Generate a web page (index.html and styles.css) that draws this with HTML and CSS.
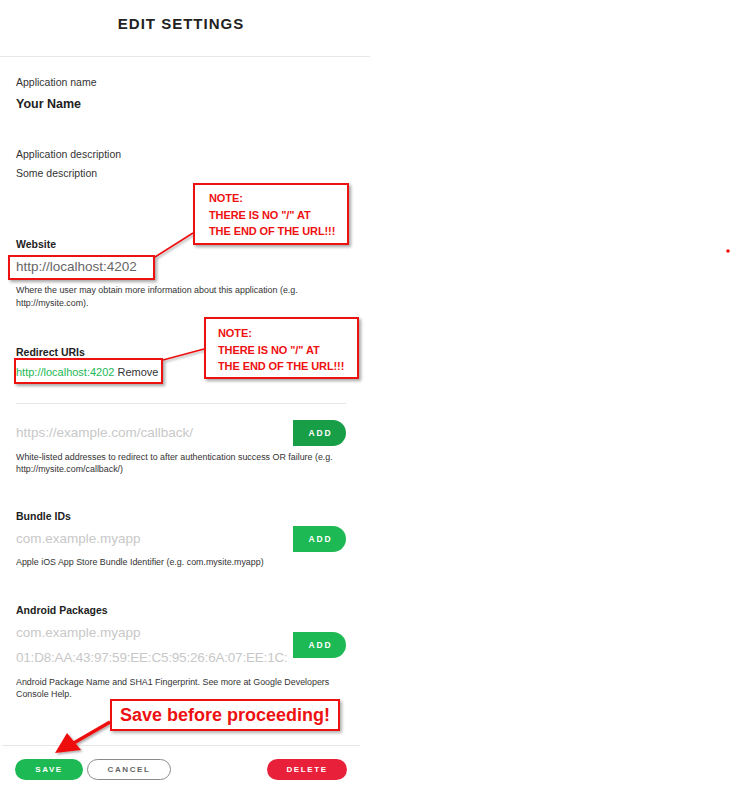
FILE: index.html
```html
<!DOCTYPE html>
<html>
<head>
<meta charset="utf-8">
<title>Edit Settings</title>
<link rel="stylesheet" href="styles.css">
</head>
<body>
<div class="panel">
  <div class="header">EDIT SETTINGS</div>
  <div class="content">
    <div class="label m17">Application name</div>
    <div class="value-strong m5">Your Name</div>

    <div class="label m32">Application description</div>
    <div class="label m3">Some description</div>

    <div class="label bold m55">Website</div>
    <input class="text-input website m4" value="http://localhost:4202">
    <div class="help m6">Where the user may obtain more information about this application (e.g. http://mysite.com).</div>

    <div class="label bold m34">Redirect URIs</div>
    <div class="uri m4"><span class="uri-link">http://localhost:4202</span> <span class="remove">Remove</span></div>
    <div class="divider"></div>

    <div class="add-row m16">
      <input class="text-input" placeholder="https://example.com/callback/">
      <button class="add-btn dark">ADD</button>
    </div>
    <div class="help h2 m5">White-listed addresses to redirect to after authentication success OR failure (e.g. http://mysite.com/callback/)</div>

    <div class="label bold m32">Bundle IDs</div>
    <div class="add-row m2">
      <input class="text-input" placeholder="com.example.myapp">
      <button class="add-btn">ADD</button>
    </div>
    <div class="help m4">Apple iOS App Store Bundle Identifier (e.g. com.mysite.myapp)</div>

    <div class="label bold m32">Android Packages</div>
    <div class="add-row pkg m2">
      <div class="inputs">
        <input class="text-input tall" placeholder="com.example.myapp">
        <input class="text-input tall fp" placeholder="01:D8:AA:43:97:59:EE:C5:95:26:6A:07:EE:1C:">
      </div>
      <button class="add-btn">ADD</button>
    </div>
    <div class="help h2 m6">Android Package Name and SHA1 Fingerprint. See more at Google Developers Console Help.</div>
  </div>
  <div class="footer">
    <button class="pill save">SAVE</button>
    <button class="pill cancel">CANCEL</button>
    <span class="spacer"></span>
    <button class="pill delete">DELETE</button>
  </div>
</div>

<div class="annotations">
  <svg class="connectors" width="731" height="795" viewBox="0 0 731 795">
    <defs>
      <filter id="sh" x="-20%" y="-20%" width="140%" height="140%">
        <feDropShadow dx="1.5" dy="1.5" stdDeviation="1" flood-color="#000" flood-opacity="0.35"/>
      </filter>
    </defs>
    <g filter="url(#sh)">
      <line x1="193" y1="233" x2="155" y2="257" stroke="#ee1111" stroke-width="1.5"/>
      <line x1="204" y1="349" x2="163" y2="360" stroke="#ee1111" stroke-width="1.5"/>
      <line x1="110" y1="722" x2="72" y2="744" stroke="#ee1111" stroke-width="3.5"/>
      <polygon points="55,753 67,733 81,750" fill="#ee1111"/>
    </g>
    <circle cx="728" cy="251" r="1.8" fill="#ee1111"/>
  </svg>
  <div class="red-box box-website"></div>
  <div class="red-box box-redirect"></div>
  <div class="note note-1">NOTE:<br>THERE IS NO "/" AT<br>THE END OF THE URL!!!</div>
  <div class="note note-2">NOTE:<br>THERE IS NO "/" AT<br>THE END OF THE URL!!!</div>
  <div class="save-note">Save before proceeding!</div>
</div>
</body>
</html>
```
FILE: styles.css
```css
body {
  margin: 0;
  background: #fff;
  font-family: "Liberation Sans", Arial, sans-serif;
  color: #222;
}

.panel {
  width: 370px;
}

.header {
  height: 57px;
  box-sizing: border-box;
  border-bottom: 1px solid #e6e6e6;
  padding: 14px 8px 0 0;
  text-align: center;
  font-size: 15px;
  line-height: 20px;
  font-weight: bold;
  letter-spacing: 1px;
  color: #222;
}

.content {
  padding: 0 24px 0 16px;
  display: flex;
  flex-direction: column;
}

.label {
  font-size: 10.5px;
  line-height: 16px;
  color: #333;
}

.label.bold {
  font-weight: bold;
  color: #222;
}

.value-strong {
  font-size: 12.5px;
  line-height: 18px;
  font-weight: bold;
  color: #222;
}

.text-input {
  display: block;
  border: none;
  outline: none;
  padding: 0;
  margin-left: 0;
  background: transparent;
  font-family: "Liberation Sans", Arial, sans-serif;
  font-size: 13.5px;
  line-height: 22px;
  height: 22px;
  color: #666;
  width: 260px;
}

.text-input::placeholder {
  color: #c8c8c8;
}

.text-input.tall {
  height: 25px;
  line-height: 25px;
  width: 275px;
}

.text-input.fp {
  letter-spacing: -0.2px;
}

.help {
  font-size: 8.9px;
  line-height: 13px;
  color: #333;
}

.help.h2 {
  line-height: 12.5px;
}

.uri {
  font-size: 11px;
  line-height: 16px;
}

.uri-link {
  color: #1db954;
}

.remove {
  color: #333;
}

.divider {
  margin-top: 23px;
  border-top: 1px solid #e6e6e6;
}

.add-row {
  display: flex;
  align-items: center;
  justify-content: space-between;
  min-height: 26px;
}

.inputs {
  display: flex;
  flex-direction: column;
}

.add-btn {
  width: 53px;
  height: 26px;
  border: none;
  border-radius: 0 13px 13px 0;
  background: #1db954;
  color: #fff;
  font-family: "Liberation Sans", Arial, sans-serif;
  font-weight: bold;
  font-size: 8.5px;
  letter-spacing: 1.8px;
  padding: 0 0 0 2px;
}

.add-btn.dark {
  background: #199e48;
}

.footer {
  margin: 44.5px 10px 0 2px;
  border-top: 1px solid #e6e6e6;
  padding: 13px 13px 0 13px;
  display: flex;
  align-items: center;
  gap: 4px;
}

.spacer {
  flex: 1;
}

.pill {
  height: 21px;
  border-radius: 11px;
  border: none;
  font-family: "Liberation Sans", Arial, sans-serif;
  font-weight: bold;
  font-size: 8px;
  letter-spacing: 1.6px;
  color: #fff;
  padding: 0;
}

.pill.save {
  width: 68px;
  background: #1db954;
}

.pill.cancel {
  width: 84px;
  background: #fff;
  border: 1.5px solid #8a8a8a;
  color: #666;
}

.pill.delete {
  width: 80px;
  background: #e8203a;
}

/* spacing helpers */
.m2 { margin-top: 2px; }
.m3 { margin-top: 3px; }
.m4 { margin-top: 4px; }
.m5 { margin-top: 5px; }
.m6 { margin-top: 6px; }
.m16 { margin-top: 16px; }
.m17 { margin-top: 17px; }
.m32 { margin-top: 32.5px; }
.m34 { margin-top: 34px; }
.m55 { margin-top: 55px; }

/* annotation overlay */
.annotations {
  position: absolute;
  left: 0;
  top: 0;
  width: 731px;
  height: 795px;
  pointer-events: none;
}

.connectors {
  position: absolute;
  left: 0;
  top: 0;
}

.red-box {
  position: absolute;
  box-sizing: border-box;
  border: 2px solid #ee1111;
  box-shadow: 2px 2px 3px rgba(0, 0, 0, 0.35);
}

.box-website {
  left: 8px;
  top: 255px;
  width: 147px;
  height: 25px;
}

.box-redirect {
  left: 14px;
  top: 358px;
  width: 149px;
  height: 26px;
}

.note {
  position: absolute;
  box-sizing: border-box;
  background: #fff;
  border: 2.5px solid #ee1111;
  box-shadow: 2px 2px 3px rgba(0, 0, 0, 0.35);
  color: #ee1111;
  font-weight: bold;
  font-size: 11px;
  line-height: 16.5px;
  letter-spacing: -0.1px;
}

.note-1 {
  left: 193px;
  top: 183px;
  width: 156px;
  height: 62px;
  padding: 5px 0 0 14px;
}

.note-2 {
  left: 204px;
  top: 317px;
  width: 155px;
  height: 62px;
  padding: 6px 0 0 12px;
}

.save-note {
  position: absolute;
  box-sizing: border-box;
  left: 110px;
  top: 699px;
  width: 230px;
  height: 32px;
  background: #fff;
  border: 2px solid #ee1111;
  box-shadow: 2px 2px 3px rgba(0, 0, 0, 0.3);
  color: #ee1111;
  font-weight: bold;
  font-size: 18px;
  line-height: 28px;
  text-align: center;
}
```
